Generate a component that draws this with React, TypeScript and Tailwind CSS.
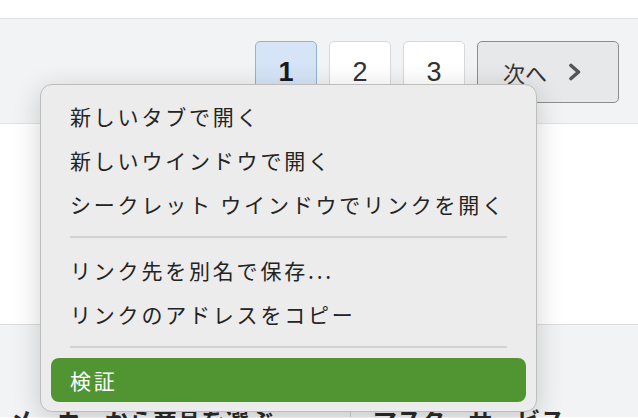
import React from "react";

const jp = { fontFamily: '"Noto Sans CJK JP", "Noto Sans", sans-serif' };

function MenuItem({ label, active }: { label: string; active?: boolean }) {
  return (
    <div
      className={
        active
          ? "mx-[10px] h-[44px] flex items-center pl-[19px] rounded-[8px] bg-[#509531] text-white"
          : "mx-[10px] h-[44px] flex items-center pl-[19px] text-[#232323]"
      }
    >
      <span className="text-[21px] tracking-[2.8px] leading-none">{label}</span>
    </div>
  );
}

function Sep() {
  return <div className="mx-[29px] my-[10px] h-[2px] bg-[#d2d2d2]" />;
}

export default function App() {
  return (
    <div className="relative w-[638px] h-[418px] overflow-hidden bg-white" style={jp}>
      <div className="h-[18px] bg-white" />
      <div className="h-[106px] bg-[#f2f3f4] border-t border-b border-[#e2e2e2] flex justify-end items-start pt-[22px] pr-[19px] gap-[12px]">
        <div className="w-[62px] h-[62px] rounded-[5px] border border-[#93b3cf] bg-[#d5e5f7] flex items-center justify-center text-[27px] text-[#1a1a1a] font-bold" style={{ fontFamily: '"Liberation Sans", Arial, sans-serif' }}>
          1
        </div>
        <div className="w-[62px] h-[62px] rounded-[5px] border border-[#d8d8d8] bg-white flex items-center justify-center text-[27px] text-[#333]" style={{ fontFamily: '"Liberation Sans", Arial, sans-serif' }}>
          2
        </div>
        <div className="w-[62px] h-[62px] rounded-[5px] border border-[#d8d8d8] bg-white flex items-center justify-center text-[27px] text-[#333]" style={{ fontFamily: '"Liberation Sans", Arial, sans-serif' }}>
          3
        </div>
        <div className="w-[142px] h-[62px] rounded-[5px] border border-[#8e8e8e] bg-[#e7e8e9] flex items-center pl-[25px] text-[#333]">
          <span className="text-[22px] leading-none">次へ</span>
          <svg className="ml-[20px]" width="16" height="18" viewBox="0 0 16 18">
            <path d="M4 2.5 L11.5 9 L4 15.5" fill="none" stroke="#555" strokeWidth="3.6" strokeLinecap="round" strokeLinejoin="round" />
          </svg>
        </div>
      </div>
      <div className="h-[201px] bg-white border-b border-[#dcdcdc]" />
      <div className="h-[92px] bg-[#f2f3f4] flex pt-[72px]">
        <div className="w-[350px] pl-[9px] pt-[8px] text-[24px] font-bold text-[#2a2a2a] leading-[30px] whitespace-nowrap">
          メーカーから商品を選ぶ
        </div>
        <div className="border-l border-[#cfcfcf] pl-[22px] pt-[8px] text-[24px] font-bold text-[#2a2a2a] leading-[30px] whitespace-nowrap">
          マスターサービス
        </div>
      </div>

      <div className="absolute left-[40px] top-[84px] w-[497px] rounded-[12px] bg-[#ececec] border border-[#bdbdbd] shadow-[0_6px_28px_rgba(0,0,0,0.18)] py-[9px]">
        <MenuItem label="新しいタブで開く" />
        <MenuItem label="新しいウインドウで開く" />
        <MenuItem label="シークレット ウインドウでリンクを開く" />
        <Sep />
        <MenuItem label="リンク先を別名で保存..." />
        <MenuItem label="リンクのアドレスをコピー" />
        <Sep />
        <MenuItem label="検証" active />
      </div>
    </div>
  );
}
